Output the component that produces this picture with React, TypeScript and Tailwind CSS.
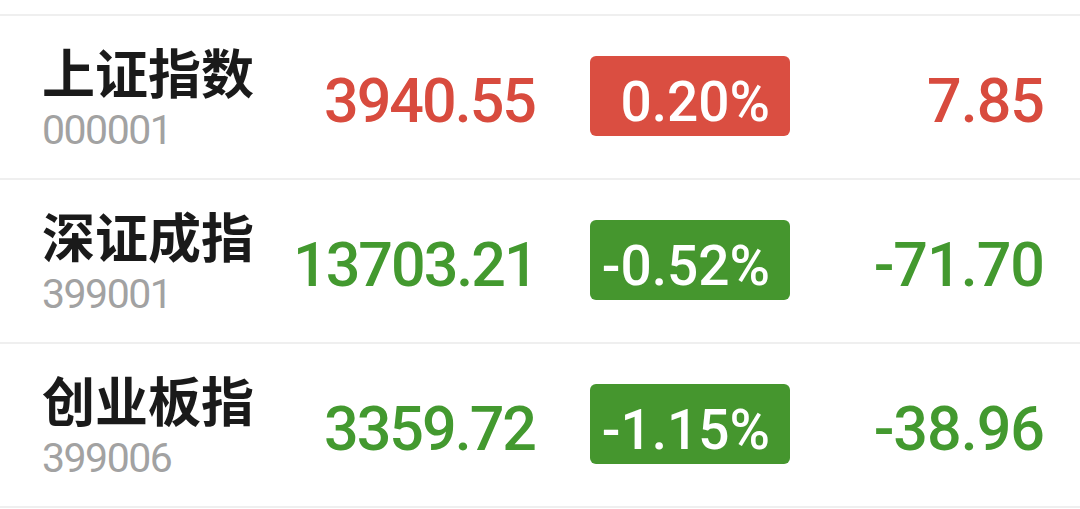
import React from 'react';

type Quote = {
  name: string;
  code: string;
  price: string;
  pct: string;
  change: string;
  up: boolean;
};

const quotes: Quote[] = [
  { name: '上证指数', code: '000001', price: '3940.55', pct: '0.20%', change: '7.85', up: true },
  { name: '深证成指', code: '399001', price: '13703.21', pct: '-0.52%', change: '-71.70', up: false },
  { name: '创业板指', code: '399006', price: '3359.72', pct: '-1.15%', change: '-38.96', up: false },
];

const numFont = { fontFamily: 'Roboto, "Liberation Sans", sans-serif' };

function QuoteRow({ q }: { q: Quote }) {
  const text = q.up ? 'text-[#d84b3e]' : 'text-[#43992f]';
  const badge = q.up ? 'bg-[#da4e41]' : 'bg-[#45962e]';

  return (
    <div className="flex items-start h-[164px] border-b-2 border-[#efefef]">
      {/* Name + code */}
      <div className="w-[293px] shrink-0 pl-[42px] pt-[29px] flex flex-col">
        <div
          className="text-[53px] leading-[53px] font-bold text-[#1a1a1a] whitespace-nowrap"
          style={{ fontFamily: '"Noto Sans CJK SC", "Noto Sans", sans-serif' }}
        >
          {q.name}
        </div>
        <div
          className="mt-[12px] text-[41px] leading-[41px] tracking-[-1.5px] text-[#a2a2a2]"
          style={numFont}
        >
          {q.code}
        </div>
      </div>

      {/* Price */}
      <div
        className={`w-[242px] shrink-0 pt-[55px] text-right whitespace-nowrap text-[61px] leading-[61px] tracking-[-2px] font-medium ${text}`}
        style={numFont}
      >
        {q.price}
      </div>

      {/* Percent badge */}
      <div className="ml-[55px] pt-[40px] shrink-0">
        <div
          className={`w-[200px] h-[80px] rounded-[6px] flex justify-end pr-[20px] pt-[19px] ${badge}`}
        >
          <span className="text-[55px] leading-[55px] font-medium text-white" style={numFont}>
            {q.pct}
          </span>
        </div>
      </div>

      {/* Change */}
      <div
        className={`flex-1 pr-[36px] pt-[55px] text-right whitespace-nowrap text-[61px] leading-[61px] tracking-[-1px] font-medium ${text}`}
        style={numFont}
      >
        {q.change}
      </div>
    </div>
  );
}

export default function App() {
  return (
    <div className="w-[1080px] h-[509px] bg-white overflow-hidden">
      <div className="mt-[14px] border-t-2 border-[#efefef]">
        {quotes.map((q) => (
          <QuoteRow key={q.code} q={q} />
        ))}
      </div>
    </div>
  );
}
